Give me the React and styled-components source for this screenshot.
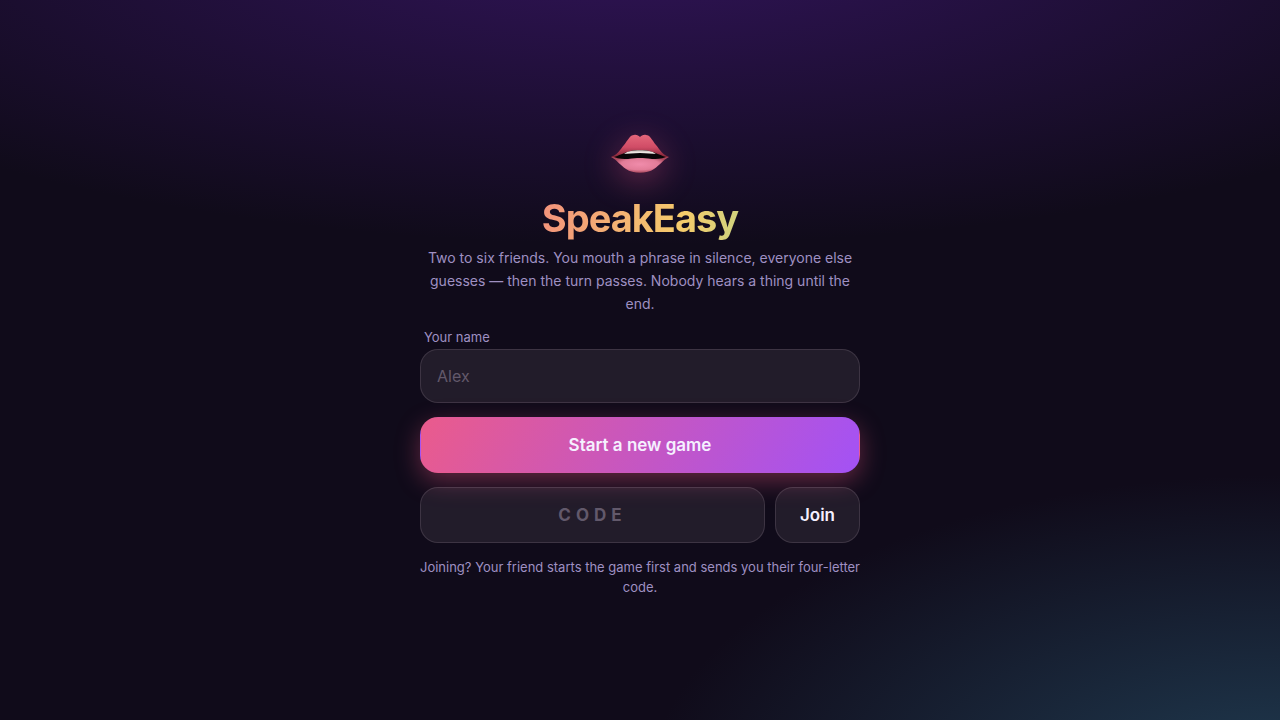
import React from "react";
import styled, { createGlobalStyle, css } from "styled-components";

const GlobalStyle = createGlobalStyle`
  *, *::before, *::after { box-sizing: border-box; }
  body {
    margin: 0;
    min-height: 100vh;
    color: #f5f0ff;
    font-family: Inter, "Liberation Sans", sans-serif;
    background:
      radial-gradient(140% 80% at 50% -10%, #32145b, transparent 55%),
      radial-gradient(90% 80% at 100% 110%, #203c52, transparent 55%),
      #100b1a;
    background-attachment: fixed;
  }
`;

const Page = styled.main`
  min-height: 100vh;
  display: flex;
  align-items: center;
  justify-content: center;
  padding: 24px;
`;

const Panel = styled.form`
  width: 100%;
  max-width: 440px;
  display: flex;
  flex-direction: column;
  gap: 14px;
`;

const Hero = styled.header`
  display: flex;
  flex-direction: column;
  text-align: center;
`;

const Lips = styled.svg`
  width: 64px;
  height: 64px;
  align-self: center;
  margin-bottom: 6px;
  filter: drop-shadow(0 8px 16px rgba(255, 92, 138, 0.35));
`;

const Title = styled.h1`
  margin: 0 0 4px;
  font-size: 38px;
  line-height: 48px;
  font-weight: 700;
  letter-spacing: -1px;
  color: transparent;
  background: linear-gradient(100deg, #f0628a, #f5cc6b 60%, #7be0a8);
  background-clip: text;
  -webkit-background-clip: text;
`;

const Copy = styled.p`
  margin: 0;
  text-align: center;
  color: #9f90c2;
  font-size: ${(p) => (p.$small ? "13px" : "14px")};
  line-height: ${(p) => (p.$small ? "20px" : "23px")};
`;

const Field = styled.div`
  display: flex;
  flex-direction: column;
  gap: 4px;
`;

const Label = styled.label`
  padding: 0 4px;
  color: #9f90c2;
  font-size: 13px;
  line-height: 16px;
`;

const surface = css`
  border: 1px solid rgba(255, 240, 250, 0.12);
  border-radius: 18px;
  background: rgba(255, 225, 245, 0.08);
  color: #f5f0ff;
  font-family: inherit;
`;

const TextInput = styled.input`
  ${surface}
  width: 100%;
  min-width: 0;
  height: 54px;
  padding: 0 16px;
  font-size: 16px;
  &::placeholder { color: #62596b; opacity: 1; }
`;

const CodeInput = styled(TextInput)`
  flex: 1;
  height: 56px;
  text-align: center;
  text-transform: uppercase;
  font-size: 17px;
  font-weight: 700;
  letter-spacing: 5px;
`;

const Button = styled.button`
  ${surface}
  height: 56px;
  padding: 0 24px;
  font-size: 17px;
  font-weight: 600;
  cursor: pointer;
  ${(p) =>
    p.$primary &&
    css`
      border-color: transparent;
      background: linear-gradient(120deg, #ea5b8c, #a352f5);
      box-shadow: 0 8px 24px rgba(255, 92, 138, 0.35);
    `}
`;

const JoinRow = styled.div`
  display: flex;
  gap: 10px;
`;

function LipsIcon() {
  return (
    <Lips viewBox="0 0 64 64" role="img" aria-label="Lips">
      <defs>
        <linearGradient id="upper" x1="0" y1="0" x2="0" y2="1">
          <stop offset="0" stopColor="#e5677b" />
          <stop offset="0.55" stopColor="#d04c66" />
          <stop offset="1" stopColor="#7c2435" />
        </linearGradient>
        <radialGradient id="lower" cx="0.5" cy="0.5" r="0.5">
          <stop offset="0" stopColor="#f08cab" />
          <stop offset="0.65" stopColor="#e27c98" />
          <stop offset="1" stopColor="#a8485c" />
        </radialGradient>
        <linearGradient id="teeth" x1="0" y1="0" x2="0" y2="1">
          <stop offset="0" stopColor="#8d7b78" />
          <stop offset="0.5" stopColor="#f4efeb" />
          <stop offset="1" stopColor="#d8cfcc" />
        </linearGradient>
      </defs>
      <path fill="url(#lower)" d="M3 33C10 31 20 32 32 32s22-1 29 1c-6 3-9 8-15 12-7 5-21 5-28 0C12 41 9 36 3 33Z" />
      <path fill="url(#upper)" d="M3 33c6-2 9-7 13-12 4-5 6-10 10-10 2-1 5 1 6 2 1-1 4-3 6-2 4 0 6 5 10 10 4 5 7 10 13 12-8 1-18 0-29 0s-21 1-29 0Z" />
      <path fill="#090507" d="M6 33c7-2 14-7 26-7s19 5 26 7c-5 2-10 2-14 2-5-1-8-1-12-1s-7 0-12 1c-4 0-9 0-14-2Z" />
      <path fill="url(#teeth)" d="M16 30c4-3 9-4 16-4s12 1 16 4c-5 0-10-1-16-1s-11 1-16 1Z" />
    </Lips>
  );
}

export default function App() {
  return (
    <>
      <GlobalStyle />
      <Page>
        <Panel onSubmit={(e) => e.preventDefault()}>
          <Hero>
            <LipsIcon />
            <Title>SpeakEasy</Title>
            <Copy>
              Two to six friends. You mouth a phrase in silence, everyone else
              guesses — then the turn passes. Nobody hears a thing until the end.
            </Copy>
          </Hero>
          <Field>
            <Label htmlFor="name">Your name</Label>
            <TextInput id="name" placeholder="Alex" autoComplete="off" />
          </Field>
          <Button type="button" $primary>Start a new game</Button>
          <JoinRow>
            <CodeInput aria-label="Game code" placeholder="CODE" maxLength={4} autoComplete="off" />
            <Button type="submit">Join</Button>
          </JoinRow>
          <Copy $small>
            Joining? Your friend starts the game first and sends you their
            four-letter code.
          </Copy>
        </Panel>
      </Page>
    </>
  );
}
